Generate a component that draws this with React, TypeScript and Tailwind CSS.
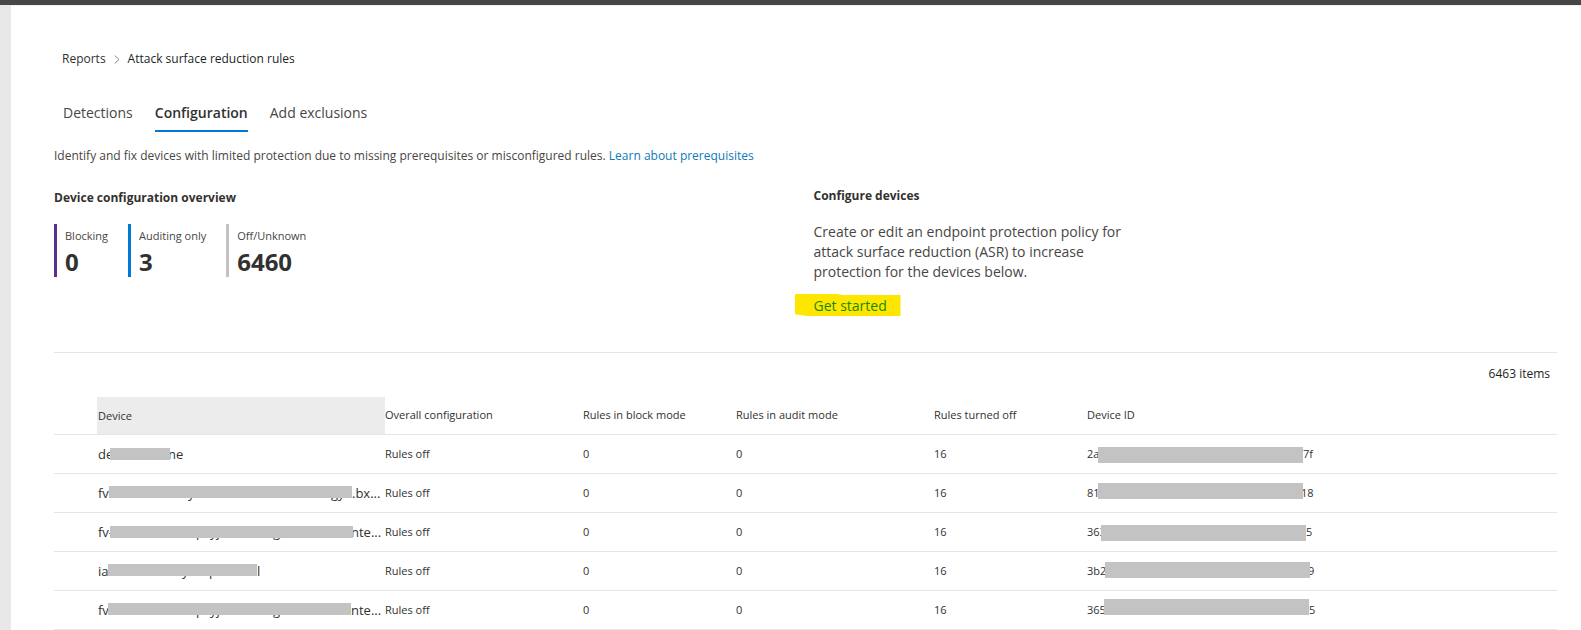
import React from "react";

type Mark = { left: number; text: string };
type Mask = {
  head: string;
  tail: string;
  start: number;
  width: number;
  top: number;
  overlap?: boolean;
  marks?: Mark[];
};
type Row = { name: Mask; id: Mask };

const tabs = ["Detections", "Configuration", "Add exclusions"];

const stats = [
  { label: "Blocking", value: "0", color: "border-[#5c2e91]" },
  { label: "Auditing only", value: "3", color: "border-[#0078d4]" },
  { label: "Off/Unknown", value: "6460", color: "border-[#c3c3c3]" },
];

const rows: Row[] = [
  {
    name: { head: "de", tail: "ne", start: 12, width: 60, top: 4, overlap: true },
    id: { head: "2a", tail: "7f", start: 11, width: 205, top: 3 },
  },
  {
    name: {
      head: "fv",
      tail: ".bx...",
      start: 11,
      width: 243,
      top: 3,
      marks: [
        { left: 79, text: "y" },
        { left: 222, text: "gy" },
      ],
    },
    id: { head: "81", tail: "18", start: 11, width: 205, top: 0, overlap: true },
  },
  {
    name: {
      head: "fv-",
      tail: "nte...",
      start: 12,
      width: 243,
      top: 4,
      overlap: true,
      marks: [
        { left: 86, text: "p" },
        { left: 100, text: "yj" },
        { left: 163, text: "g" },
      ],
    },
    id: { head: "363", tail: "5", start: 14, width: 205, top: 3 },
  },
  {
    name: {
      head: "ia",
      tail: "l",
      start: 10,
      width: 149,
      top: 3,
      marks: [
        { left: 74, text: "y" },
        { left: 101, text: "p" },
      ],
    },
    id: { head: "3b2", tail: "9", start: 18, width: 205, top: 1, overlap: true },
  },
  {
    name: {
      head: "fv",
      tail: "nte...",
      start: 10,
      width: 243,
      top: 3,
      marks: [
        { left: 88, text: "p" },
        { left: 102, text: "yj" },
        { left: 165, text: "g" },
      ],
    },
    id: { head: "365", tail: "5", start: 17, width: 205, top: -1 },
  },
];

function Masked({ mask, thick }: { mask: Mask; thick?: boolean }) {
  return (
    <div className="flex h-5 items-center leading-5 whitespace-nowrap">
      <span className="shrink-0" style={{ width: mask.start }}>
        {mask.head}
      </span>
      <span className="relative z-10 h-5 shrink-0" style={{ width: mask.width }}>
        {mask.marks?.map((m) => (
          <span key={m.left} className="absolute top-0" style={{ left: m.left }}>
            {m.text}
          </span>
        ))}
        <span
          className={`absolute inset-x-0 bg-[#c3c3c3] ${thick ? "h-4" : "h-3"}`}
          style={{ top: mask.top }}
        />
      </span>
      <span className={mask.overlap ? "-ml-0.5" : ""}>{mask.tail}</span>
    </div>
  );
}

export default function App() {
  return (
    <div className="flex min-h-screen flex-col bg-white font-['Open_Sans',sans-serif] text-[#323130]">
      <header className="h-[5px] bg-[#484644]" />
      <div className="flex flex-1">
        <aside className="w-[11px] shrink-0 bg-[#e8e8e8]" />
        <main className="min-w-0 flex-1 border-t border-[#f0f0f0] pt-[43px] pr-6 pl-[43px]">
          <nav aria-label="Breadcrumb" className="flex items-center pl-2 text-[12px] leading-5">
            <a href="#reports">Reports</a>
            <svg className="mx-2 h-[9px] w-[6px]" viewBox="0 0 6 9" fill="none" stroke="#8a8886">
              <path d="M0.7 0.5 L5 4.5 L0.7 8.5" />
            </svg>
            <span className="text-[#201f1e]">Attack surface reduction rules</span>
          </nav>

          <div role="tablist" className="mt-[34px] flex gap-[22px] pl-[9px] text-[14px] leading-5">
            {tabs.map((t) => {
              const active = t === "Configuration";
              return (
                <button
                  key={t}
                  role="tab"
                  aria-selected={active}
                  className={
                    active
                      ? "border-b-2 border-[#0078d4] pb-[7px] font-semibold"
                      : "border-b-2 border-transparent pb-[7px] text-[#484644]"
                  }
                >
                  {t}
                </button>
              );
            })}
          </div>

          <p className="mt-[14px] text-[12px] leading-5 text-[#484644]">
            Identify and fix devices with limited protection due to missing prerequisites or misconfigured rules.{" "}
            <a href="#prerequisites" className="text-[#0f7ab8]">
              Learn about prerequisites
            </a>
          </p>

          <div className="mt-5 grid grid-cols-2 gap-4">
            <section className="pt-[2px]">
              <h2 className="text-[12px] leading-5 font-bold">Device configuration overview</h2>
              <div className="mt-4 flex gap-5">
                {stats.map((s) => (
                  <div key={s.label} className={`h-[53px] border-l-3 pt-1 pl-2 ${s.color}`}>
                    <div className="text-[11px] leading-4 text-[#484644]">{s.label}</div>
                    <div className="text-[24px] leading-9 font-bold">{s.value}</div>
                  </div>
                ))}
              </div>
            </section>
            <section>
              <h2 className="text-[12px] leading-5 font-bold">Configure devices</h2>
              <p className="mt-4 max-w-[320px] text-[14px] leading-5 text-[#484644]">
                Create or edit an endpoint protection policy for attack surface reduction (ASR) to increase protection
                for the devices below.
              </p>
              <button className="mt-3 -ml-[19px] block h-[22px] w-[106px] bg-[#ffe600] pl-[19px] text-left text-[14px] leading-6 text-[#138a0c] [clip-path:polygon(0_0,40%_0,46%_5%,100%_5%,100%_100%,12%_100%,0_92%)]">
                Get started
              </button>
            </section>
          </div>

          <div className="mt-9 border-t border-[#e6e6e6] pt-[11px] pr-[7px] text-right text-[12px] leading-5 text-[#201f1e]">
            6463 items
          </div>

          <table className="mt-[13px] w-full table-fixed border-separate border-spacing-0 text-left text-[11px]">
            <colgroup>
              <col className="w-[43px]" />
              <col className="w-[288px]" />
              <col className="w-[198px]" />
              <col className="w-[153px]" />
              <col className="w-[198px]" />
              <col className="w-[153px]" />
              <col />
            </colgroup>
            <thead>
              <tr className="h-[38px] *:border-b *:border-[#e6e6e6] *:p-0 *:font-normal">
                <td />
                <th scope="col">
                  <div className="h-[37px] bg-[#ececec] pl-px leading-[37px]">Device</div>
                </th>
                <th scope="col">Overall configuration</th>
                <th scope="col">Rules in block mode</th>
                <th scope="col">Rules in audit mode</th>
                <th scope="col">Rules turned off</th>
                <th scope="col">Device ID</th>
              </tr>
            </thead>
            <tbody>
              {rows.map((r) => (
                <tr key={r.id.head} className="h-[39px] *:border-b *:border-[#e6e6e6] *:p-0">
                  <td />
                  <td className="text-[13px]">
                    <div className="pl-px">
                      <Masked mask={r.name} />
                    </div>
                  </td>
                  <td>Rules off</td>
                  <td>0</td>
                  <td>0</td>
                  <td>16</td>
                  <td>
                    <Masked mask={r.id} thick />
                  </td>
                </tr>
              ))}
            </tbody>
          </table>
        </main>
      </div>
    </div>
  );
}
